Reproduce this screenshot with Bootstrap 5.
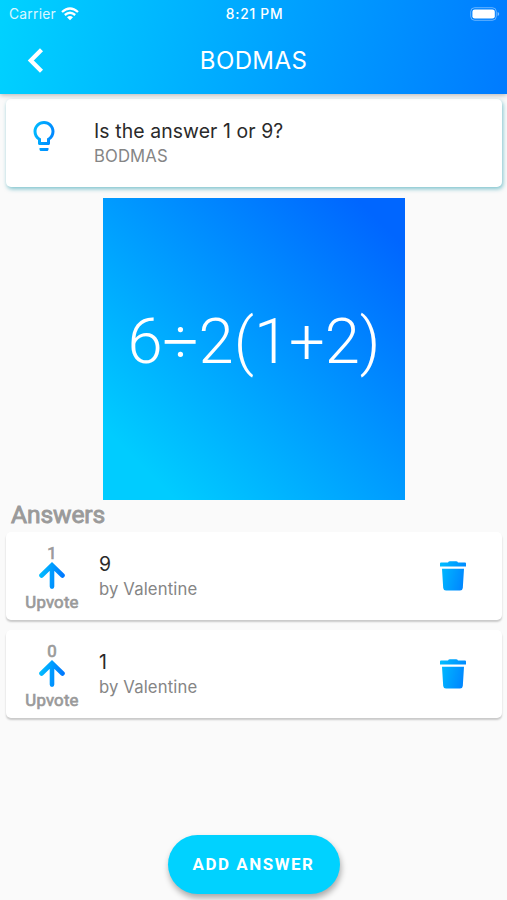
<!DOCTYPE html>
<html lang="en">
<head>
<meta charset="utf-8">
<meta name="viewport" content="width=device-width, initial-scale=1">
<title>BODMAS</title>
<link href="https://cdn.jsdelivr.net/npm/bootstrap@5.3.0/dist/css/bootstrap.min.css" rel="stylesheet">
<style>
body{background:#fafafa;font-family:Inter,"Liberation Sans",sans-serif;height:900px;overflow:hidden;color:#2a2a2a}
.topbar{height:94px;background:linear-gradient(100deg,#00d2ff 0%,#007bff 100%);box-shadow:0 1px 5px rgba(0,0,0,.3)}
.status-row{height:28px;font-size:13px;line-height:28px;padding:0 7px 0 9px}
.status-row>*{flex:1 1 0}
.carrier{font-size:13.8px;letter-spacing:.25px;opacity:.85}
.clock{font-weight:500;font-size:13.8px;letter-spacing:.75px}
.title-row{height:65px;padding:0 24px}
.title-row h1{font-size:24px;letter-spacing:.4px;font-weight:400;line-height:30px}
.title-row>.side{width:24px}
.tile{height:88px;border-radius:5px;margin:0 5px 0 6px;box-shadow:0 2px 2px rgba(0,0,0,.2)}
.question{margin-top:5px;box-shadow:1px 2px 4px rgba(0,140,160,.5)}
.bulb{width:88px;padding-left:20px;padding-top:19px}
.q-text{padding-top:19px}
.big{font-size:19.4px;line-height:26px;letter-spacing:.1px}
.sub{font-size:16.7px;line-height:25px;color:#858585;letter-spacing:.13px}
.figure-box{width:302px;height:302px;margin-top:11px;background:linear-gradient(45deg,#00ccff 12%,#0066ff 92%);font-family:Roboto,sans-serif;font-weight:300;font-size:63.3px;line-height:1;padding:0 0 15px 1px}
.heading{font-family:Roboto,sans-serif;font-weight:400;-webkit-text-stroke:.9px #9a9a9a;font-size:24.6px;line-height:29px;padding:0 0 3px 11px;letter-spacing:-.1px;color:#9a9a9a}
.vote{width:92px;font-family:Roboto,sans-serif;font-weight:400;-webkit-text-stroke:.7px #9a9a9a;color:#9a9a9a;font-size:16.8px;letter-spacing:.2px;line-height:18px;padding-top:12px}
.vote svg{margin:0 0 4px}
.a-text{padding-top:19px;padding-left:1px}
.trash{margin-right:35px}
.next-tile{margin-top:10px}
.add{width:172px;height:59px;background:#00d2ff;font-family:Roboto,sans-serif;font-weight:700;font-size:16.9px;letter-spacing:1.55px;padding-top:7px;box-shadow:1px 4px 6px rgba(0,0,0,.33);margin-bottom:6px}
</style>
</head>
<body class="d-flex flex-column">
<svg width="0" height="0" class="position-absolute" aria-hidden="true"><defs>
<linearGradient id="blue" x1="0" y1="0" x2="1" y2=".3"><stop offset="0" stop-color="#00bfff"/><stop offset="1" stop-color="#0088ff"/></linearGradient>
<linearGradient id="arrow" gradientUnits="userSpaceOnUse" x1="0" y1="0" x2="26" y2="4"><stop offset="0" stop-color="#00c4ff"/><stop offset="1" stop-color="#0078ff"/></linearGradient>
</defs></svg>
<header class="topbar text-white flex-shrink-0 position-relative">
  <div class="status-row d-flex align-items-center">
    <div class="d-flex align-items-center"><span class="carrier">Carrier</span>
      <svg class="ms-1" width="20" height="14" viewBox="0 0 18 14" fill="none" stroke="#fff" stroke-width="2.3"><path d="M1 5Q9-2 17 5M3.8 8Q9 3.6 14.2 8"/><path d="M6 10.2Q9 7.8 12 10.2L9 13.3Z" fill="#fff" stroke="none"/></svg></div>
    <div class="clock text-center">8:21 PM</div>
    <div class="d-flex justify-content-end"><svg width="30" height="14" viewBox="0 0 30 14"><rect x=".7" y=".7" width="25.6" height="12.6" rx="4" fill="none" stroke="#fff" stroke-opacity=".4"/><rect x="2.4" y="2.4" width="22.4" height="9.2" rx="2.4" fill="#fff"/><path d="M27.6 5v4q1.6-.7 1.6-2t-1.6-2" fill="#fff" fill-opacity=".5"/></svg></div>
  </div>
  <div class="title-row d-flex align-items-center justify-content-between">
    <div class="side d-flex"><svg width="24" height="26" viewBox="0 0 24 26" fill="none" stroke="#fff" stroke-width="4.300"><path d="M17.500 1.800L6.800 12.500L17.500 23.200"/></svg></div>
    <h1 class="m-0">BODMAS</h1>
    <div class="side"></div>
  </div>
</header>
<main class="d-flex flex-column flex-grow-1">
  <section class="tile question bg-white d-flex">
    <div class="bulb"><svg width="36" height="36" viewBox="0 0 24 24" fill="url(#blue)"><path d="M9 21c0 .55.45 1 1 1h4c.55 0 1-.45 1-1v-1H9v1zm3-19C8.14 2 5 5.140 5 9c0 2.380 1.190 4.470 3 5.740V17c0 .55.45 1 1 1h6c.55 0 1-.45 1-1v-2.260c1.810-1.270 3-3.360 3-5.740 0-3.860-3.140-7-7-7zm2.850 11.100l-.85.600V16h-4v-2.300l-.85-.600C7.800 12.160 7 10.630 7 9c0-2.760 2.240-5 5-5s5 2.240 5 5c0 1.630-.800 3.160-2.150 4.100z"/></svg></div>
    <div class="q-text"><div class="big">Is the answer 1 or 9?</div><div class="sub">BODMAS</div></div>
  </section>
  <div class="figure-box mx-auto text-white d-flex align-items-center justify-content-center">6÷2(1+2)</div>
  <h2 class="heading m-0">Answers</h2>
  <section class="tile bg-white d-flex">
    <div class="vote d-flex flex-column align-items-center"><span>1</span><svg width="26" height="27" viewBox="0 0 26 27" fill="none" stroke="url(#arrow)" stroke-width="4.600" stroke-linecap="round"><path d="M2.500 13.500L13 3.300L23.500 13.500M13 4V24.600"/></svg><span>Upvote</span></div>
    <div class="a-text flex-grow-1"><div class="big">9</div><div class="sub">by Valentine</div></div>
    <div class="trash d-flex align-items-center"><svg width="28" height="32" viewBox="0 0 28 32" fill="url(#blue)"><path d="M1 3.500Q1 2.500 2 2.500H9Q9.500 1.200 11 1.200H17Q18.500 1.200 19 2.500H26Q27 2.500 27 3.500V6.500H1ZM3 8.700H25L23.800 28Q23.600 30.500 21 30.500H7Q4.500 30.500 4.200 28Z"/></svg></div>
  </section>
  <section class="tile next-tile bg-white d-flex">
    <div class="vote d-flex flex-column align-items-center"><span>0</span><svg width="26" height="27" viewBox="0 0 26 27" fill="none" stroke="url(#arrow)" stroke-width="4.600" stroke-linecap="round"><path d="M2.500 13.500L13 3.300L23.500 13.500M13 4V24.600"/></svg><span>Upvote</span></div>
    <div class="a-text flex-grow-1"><div class="big">1</div><div class="sub">by Valentine</div></div>
    <div class="trash d-flex align-items-center"><svg width="28" height="32" viewBox="0 0 28 32" fill="url(#blue)"><path d="M1 3.500Q1 2.500 2 2.500H9Q9.500 1.200 11 1.200H17Q18.500 1.200 19 2.500H26Q27 2.500 27 3.500V6.500H1ZM3 8.700H25L23.800 28Q23.600 30.500 21 30.500H7Q4.500 30.500 4.200 28Z"/></svg></div>
  </section>
  <button class="add btn rounded-pill border-0 text-white mt-auto mx-auto">ADD ANSWER</button>
</main>
<script src="https://cdn.jsdelivr.net/npm/bootstrap@5.3.0/dist/js/bootstrap.bundle.min.js"></script>
</body>
</html>
